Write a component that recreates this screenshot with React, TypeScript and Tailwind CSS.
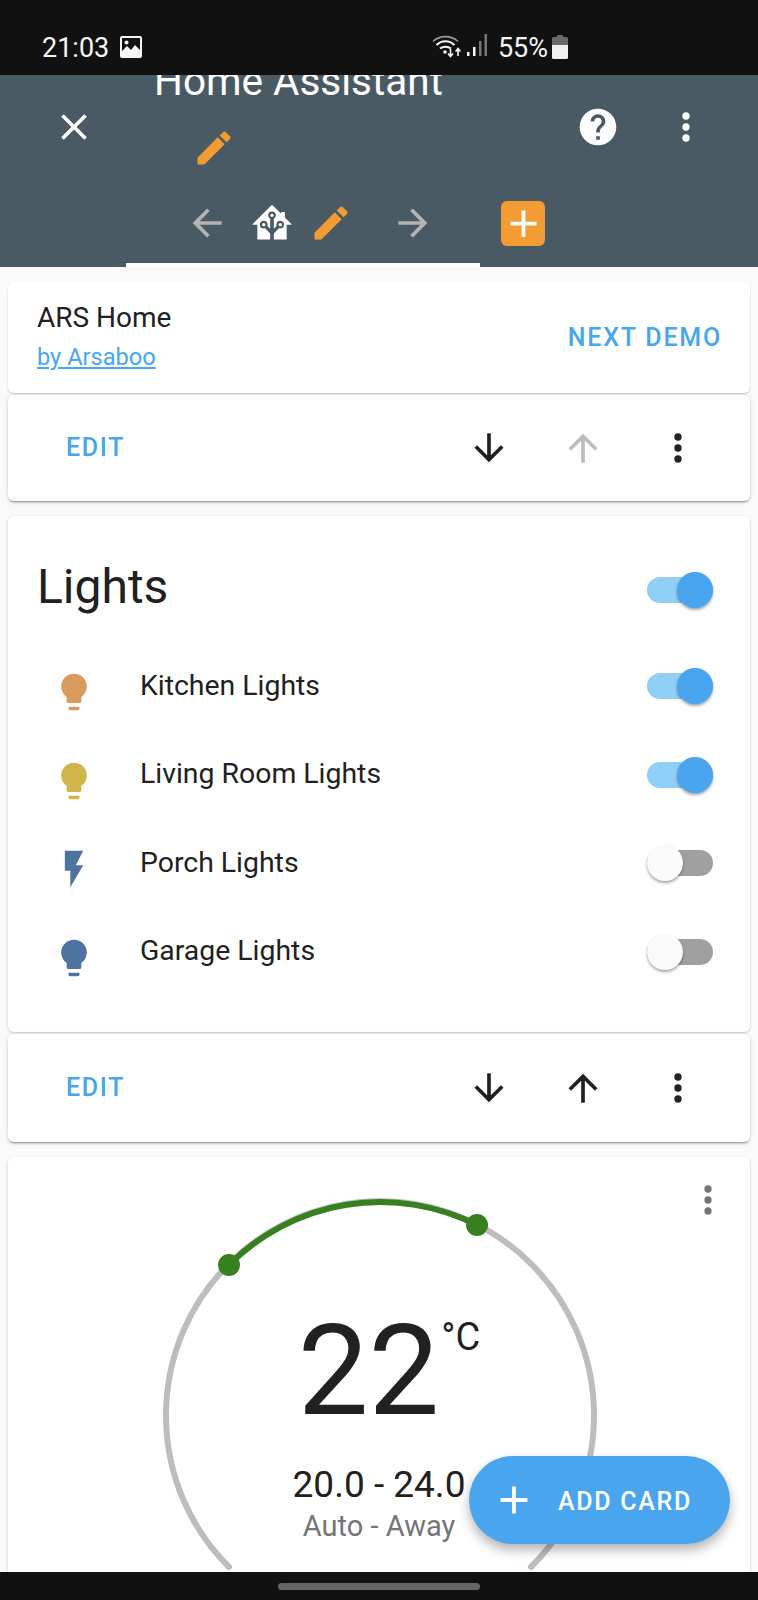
const mdi = {
  close: "M19,6.41L17.59,5L12,10.59L6.41,5L5,6.41L10.59,12L5,17.59L6.41,19L12,13.41L17.59,19L19,17.59L13.41,12L19,6.41Z",
  pencil: "M20.71,7.04C21.1,6.65 21.1,6 20.71,5.63L18.37,3.29C18,2.9 17.35,2.9 16.96,3.29L15.12,5.12L18.87,8.87M3,17.25V21H6.75L17.81,9.93L14.06,6.18L3,17.25Z",
  help: "M15.07,11.25L14.17,12.17C13.45,12.89 13,13.5 13,15H11V14.5C11,13.39 11.45,12.39 12.17,11.67L13.41,10.41C13.78,10.05 14,9.55 14,9C14,7.89 13.1,7 12,7A2,2 0 0,0 10,9H8A4,4 0 0,1 12,5A4,4 0 0,1 16,9C16,9.88 15.64,10.67 15.07,11.25M13,19H11V17H13M12,2A10,10 0 0,0 2,12C2,17.53 6.47,22 12,22C17.5,22 22,17.5 22,12C22,6.47 17.53,2 12,2Z",
  dots: "M12,16A2,2 0 0,1 14,18A2,2 0 0,1 12,20A2,2 0 0,1 10,18A2,2 0 0,1 12,16M12,10A2,2 0 0,1 14,12A2,2 0 0,1 12,14A2,2 0 0,1 10,12A2,2 0 0,1 12,10M12,4A2,2 0 0,1 14,6A2,2 0 0,1 12,8A2,2 0 0,1 10,6A2,2 0 0,1 12,4Z",
  left: "M20,11V13H8L13.5,18.5L12.08,19.92L4.16,12L12.08,4.08L13.5,5.5L8,11H20Z",
  right: "M4,11V13H16L10.5,18.5L11.92,19.92L19.84,12L11.92,4.08L10.5,5.5L16,11H4Z",
  down: "M11,4H13V16L18.5,10.5L19.92,11.92L12,19.84L4.08,11.92L5.5,10.5L11,16V4Z",
  up: "M13,20H11V8L5.5,13.5L4.08,12.08L12,4.16L19.92,12.08L18.5,13.5L13,8V20Z",
  plus: "M19,13H13V19H11V13H5V11H11V5H13V11H19V13Z",
  bulb: "M12,2A7,7 0 0,0 5,9C5,11.38 6.19,13.47 8,14.74V17A1,1 0 0,0 9,18H15A1,1 0 0,0 16,17V14.74C17.81,13.47 19,11.38 19,9A7,7 0 0,0 12,2M9,21A1,1 0 0,0 10,22H14A1,1 0 0,0 15,21V20H9V21Z",
  flash: "M7,2V13H10V22L17,10H13L17,2H7Z",
  home: "M21.8,13H20V21H13V17.67L15.79,14.88L16.5,15C17.66,15 18.6,14.06 18.6,12.9C18.6,11.74 17.66,10.8 16.5,10.8A2.1,2.1 0 0,0 14.4,12.9L14.5,13.61L13,15.13V9.65C13.66,9.29 14.1,8.6 14.1,7.8A2.1,2.1 0 0,0 12,5.7A2.1,2.1 0 0,0 9.9,7.8C9.9,8.6 10.34,9.29 11,9.65V15.13L9.5,13.61L9.6,12.9A2.1,2.1 0 0,0 7.5,10.8A2.1,2.1 0 0,0 5.4,12.9A2.1,2.1 0 0,0 7.5,15L8.21,14.88L11,17.67V21H4V13H2.25C1.83,13 1.42,13 1.42,12.79C1.43,12.57 1.85,12.15 2.28,11.72L11,3C11.33,2.67 11.67,2.33 12,2.33C12.33,2.33 12.67,2.67 13,3L17,7V6H19V9L21.78,11.78C22.18,12.18 22.59,12.59 22.6,12.8C22.6,13 22.2,13 21.8,13M7.5,12A0.9,0.9 0 0,1 8.4,12.9A0.9,0.9 0 0,1 7.5,13.8A0.9,0.9 0 0,1 6.6,12.9A0.9,0.9 0 0,1 7.5,12M16.5,12C17,12 17.4,12.4 17.4,12.9C17.4,13.4 17,13.8 16.5,13.8A0.9,0.9 0 0,1 15.6,12.9A0.9,0.9 0 0,1 16.5,12M12,6.9C12.5,6.9 12.9,7.3 12.9,7.8C12.9,8.3 12.5,8.7 12,8.7C11.5,8.7 11.1,8.3 11.1,7.8C11.1,7.3 11.5,6.9 12,6.9Z",
};

function Icon({ d, className = "" }: { d: string; className?: string }) {
  return (
    <svg viewBox="0 0 24 24" className={`h-[44px] w-[44px] shrink-0 fill-current ${className}`}>
      <path d={d} fillRule="evenodd" />
    </svg>
  );
}

function StatusBar() {
  return (
    <div className="flex h-[75px] shrink-0 bg-[#111111] pl-[42px] pr-[190px] pt-[33px] text-[#f5f5f5]">
      <span className="text-[27px] leading-[30px]">21:03</span>
      {/* gallery notification */}
      <svg viewBox="0 0 22 22" className="ml-[11px] mt-[3px] h-[22px] w-[22px]">
        <rect width="22" height="22" rx="2" fill="#f5f5f5" />
        <rect x="2" y="2" width="18" height="18" fill="#111111" />
        <circle cx="6.5" cy="6.5" r="2" fill="#f5f5f5" />
        <path d="M2 20V15L7 10L11 14L15 9L20 14V20Z" fill="#f5f5f5" />
      </svg>
      <div className="ml-auto flex items-start">
        {/* wifi + data arrows */}
        <svg viewBox="0 0 30 24" className="mt-[1px] h-[24px] w-[30px]" fill="none" stroke="#f5f5f5">
          <path d="M1 7.5C8 1 19 1 26 7.5" strokeWidth="1.6" stroke="#9a9a9a" />
          <path d="M4.5 11C10 6 17 6 22.5 11" strokeWidth="2" />
          <path d="M8 14.5C11 12 16 12 19 14.5" strokeWidth="2" />
          <circle cx="13" cy="18" r="1.8" fill="#f5f5f5" stroke="none" />
          <path d="M18.5 15V22M16 19.5L18.5 22.5L21 19.5" strokeWidth="1.6" />
          <path d="M26 22V15M23.6 17.5L26 14.5L28.4 17.5" strokeWidth="1.6" />
        </svg>
        {/* signal bars */}
        <svg viewBox="0 0 20 24" className="ml-[5px] h-[24px] w-[20px]">
          <rect x="0" y="19" width="2.5" height="4" fill="#f5f5f5" />
          <rect x="6" y="14" width="2.5" height="9" fill="#f5f5f5" />
          <rect x="12" y="8" width="2.5" height="15" fill="#777777" />
          <rect x="17.5" y="1" width="2.5" height="22" fill="#777777" />
        </svg>
        <span className="ml-[11px] text-[27px] leading-[30px]">55%</span>
        {/* battery */}
        <svg viewBox="0 0 16 24" className="ml-[4px] mt-[2px] h-[24px] w-[16px]">
          <path d="M5 0H11V2H14.5A1.5 1.5 0 0 1 16 3.5V10H0V3.5A1.5 1.5 0 0 1 1.5 2H5Z" fill="#6a6a6a" />
          <path d="M0 10H16V22.5A1.5 1.5 0 0 1 14.5 24H1.5A1.5 1.5 0 0 1 0 22.5Z" fill="#f0f0f0" />
        </svg>
      </div>
    </div>
  );
}

function Header() {
  return (
    <div className="h-[192px] shrink-0 overflow-hidden bg-[#4a5a65] text-white">
      <div className="flex h-[125px] pl-[52px]">
        <Icon d={mdi.close} className="mt-[30px]" />
        <div className="ml-[58px] w-[420px]">
          <div className="-mt-[17px] text-[40.5px] leading-[47px]">Home Assistant</div>
          <Icon d={mdi.pencil} className="ml-[38px] mt-[21px] text-[#f39c34]" />
        </div>
        <Icon d={mdi.help} className="ml-[2px] mt-[30px]" />
        <Icon d={mdi.dots} className="ml-[44px] mt-[30px]" />
      </div>
      <div className="flex h-[67px] pl-[126px]">
        <div className="flex h-[67px] w-[354px] items-start border-b-[4px] border-white pt-[1px]">
          <Icon d={mdi.left} className="ml-[59px] text-[#b4b4b4]" />
          <Icon d={mdi.home} className="ml-[21px]" />
          <Icon d={mdi.pencil} className="ml-[15px] text-[#f39c34]" />
          <Icon d={mdi.right} className="ml-[38px] text-[#b4b4b4]" />
        </div>
        <div className="ml-[21px] mt-[1px] flex h-[45px] w-[44px] items-center justify-center rounded-[6px] bg-[#f39c34]">
          <svg viewBox="0 0 24 24" className="h-[45px] w-[45px] shrink-0 fill-white">
            <path d={mdi.plus} />
          </svg>
        </div>
      </div>
    </div>
  );
}

function CardActions({ upDisabled, height }: { upDisabled?: boolean; height: string }) {
  return (
    <div className={`mt-[2px] flex items-center rounded-[6px] bg-white pl-[58px] pr-[50px] text-[#212121] shadow-[0_2px_2px_rgba(0,0,0,0.14),0_1px_5px_rgba(0,0,0,0.12),0_3px_1px_-2px_rgba(0,0,0,0.2)] ${height}`}>
      <span className="text-[25px] font-medium tracking-[1.7px] text-[#46a6f0]">EDIT</span>
      <Icon d={mdi.down} className="ml-auto" />
      <Icon d={mdi.up} className={`ml-[50px] ${upDisabled ? "text-[#bdbdbd]" : ""}`} />
      <Icon d={mdi.dots} className="ml-[51px]" />
    </div>
  );
}

function Toggle({ on }: { on: boolean }) {
  return (
    <div className={`relative h-[26px] w-[66px] rounded-full ${on ? "bg-[#90cff7]" : "bg-[#a0a0a0]"}`}>
      <div
        className={`absolute top-[-5px] h-[36px] w-[36px] rounded-full shadow-[0_2px_3px_rgba(0,0,0,0.35)] ${
          on ? "right-0 bg-[#4aa5ef]" : "left-0 bg-[#fafafa]"
        }`}
      />
    </div>
  );
}

const lights = [
  { name: "Kitchen Lights", icon: mdi.bulb, color: "text-[#d99a5e]", on: true },
  { name: "Living Room Lights", icon: mdi.bulb, color: "text-[#d0b548]", on: true },
  { name: "Porch Lights", icon: mdi.flash, color: "text-[#4f73a0]", on: false },
  { name: "Garage Lights", icon: mdi.bulb, color: "text-[#4f73a0]", on: false },
];

function LightsCard() {
  return (
    <div className="mt-[15px] h-[516px] shrink-0 rounded-[6px] bg-white pl-[29px] pr-[37px] pt-[30px] shadow-[0_1px_3px_rgba(0,0,0,0.2)]">
      <div className="flex h-[88px] items-center justify-between">
        <span className="-mt-[6px] text-[48px] leading-[56px] text-[#212121]">Lights</span>
        <Toggle on />
      </div>
      <div className="mt-[8px] flex flex-col">
        {lights.map((l) => (
          <div key={l.name} className="flex h-[88.5px] items-center">
            <Icon d={l.icon} className={`ml-[15px] mt-[12px] ${l.color}`} />
            <span className="ml-[44px] text-[28.4px] text-[#212121]">{l.name}</span>
            <div className="ml-auto">
              <Toggle on={l.on} />
            </div>
          </div>
        ))}
      </div>
    </div>
  );
}

function ClimateCard() {
  return (
    <div className="relative mt-[15px] flex-1 overflow-hidden rounded-t-[6px] bg-white shadow-[0_1px_3px_rgba(0,0,0,0.2)]">
      <svg viewBox="0 0 742 415" className="absolute left-0 top-0 h-[415px] w-[742px]" fill="none">
        <path d="M221 410A214 214 0 1 1 523 410" stroke="#bdbdbd" strokeWidth="6" strokeLinecap="round" />
        <path d="M221 108A214 214 0 0 1 469 68" stroke="#38801f" strokeWidth="6" />
        <circle cx="221" cy="108" r="11" fill="#38801f" />
        <circle cx="469" cy="68" r="11" fill="#38801f" />
      </svg>
      <Icon d={mdi.dots} className="absolute right-[20px] top-[21px] text-[#757575]" />
      <div className="relative flex flex-col items-center pt-[140px]">
        <div className="ml-[20px] flex items-start">
          <span className="text-[126px] leading-[148px] text-[#212121]">22</span>
          <span className="ml-[2px] mt-[17px] text-[38px] leading-[47px] text-[#212121]">°C</span>
        </div>
        <div className="mt-[18px] text-[37px] leading-[43px] text-[#212121]">20.0 - 24.0</div>
        <div className="mt-[3px] text-[29px] leading-[35px] text-[#757575]">Auto - Away</div>
      </div>
    </div>
  );
}

export default function App() {
  return (
    <div className="relative flex h-[1600px] w-[758px] flex-col overflow-hidden bg-[#fafafa] font-['Roboto',sans-serif]">
      <StatusBar />
      <Header />
      <div className="flex min-h-0 flex-1 flex-col overflow-hidden px-[8px]">
        <div className="mt-[15px] flex h-[111px] shrink-0 items-center justify-between rounded-[6px] bg-white pl-[29px] pr-[28px] shadow-[0_1px_2px_rgba(0,0,0,0.2)]">
          <div className="-mt-[2px]">
            <div className="-mt-[2px] text-[28px] leading-[33px] text-[#212121]">ARS Home</div>
            <a className="block pt-[9px] text-[23.6px] leading-[28px] text-[#46a6f0] underline">by Arsaboo</a>
          </div>
          <span className="text-[25px] font-medium tracking-[1.8px] text-[#46a6f0]">NEXT DEMO</span>
        </div>
        <CardActions upDisabled height="h-[106px] shrink-0" />
        <LightsCard />
        <CardActions height="h-[108px] shrink-0" />
        <ClimateCard />
      </div>
      <div className="flex h-[28px] shrink-0 items-center justify-center bg-[#111111]">
        <div className="h-[7px] w-[202px] rounded-full bg-[#666666]" />
      </div>
      <button className="absolute bottom-[56px] right-[28px] flex h-[88px] w-[261px] items-center rounded-full bg-[#4aa5ef] pl-[22px] text-white shadow-[0_6px_12px_rgba(0,0,0,0.3)]">
        <Icon d={mdi.plus} className="!h-[46px] !w-[46px]" />
        <span className="ml-[21px] mt-[3px] text-[25px] font-medium tracking-[1.7px]">ADD CARD</span>
      </button>
    </div>
  );
}
